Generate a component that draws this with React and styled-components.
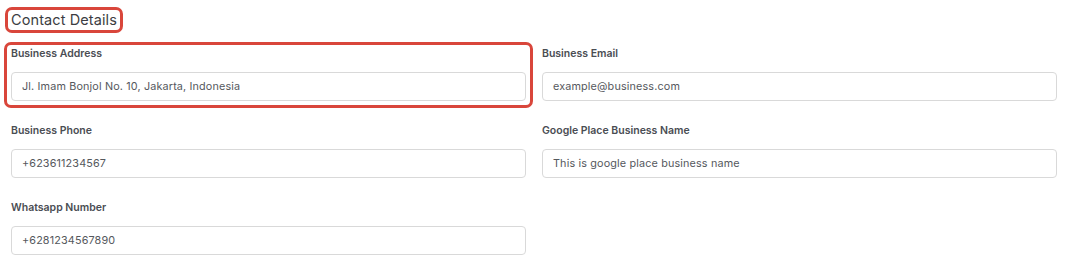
import React from "react";
import styled, { createGlobalStyle, css } from "styled-components";

const Global = createGlobalStyle`
  html, body { margin: 0; padding: 0; background: #ffffff; }
  body { font-family: "Inter", "Open Sans", sans-serif; }
`;

const Page = styled.div`
  padding: 9px 15px 0 11px;
  width: 1046px;
`;

const highlight = css`
  position: relative;
  &::after {
    content: "";
    position: absolute;
    pointer-events: none;
    border: 3px solid #d9463b;
    border-radius: 7px;
  }
`;

const Title = styled.h2`
  ${highlight}
  display: inline-block;
  margin: 0;
  font-size: 14.5px;
  line-height: 20px;
  font-weight: 400;
  color: #3b3d42;
  letter-spacing: 0.1px;
  &::after {
    inset: -3px -6px -3px -6px;
  }
`;

const Grid = styled.div`
  display: grid;
  grid-template-columns: 515px 515px;
  column-gap: 16px;
  row-gap: 22px;
  margin-top: 16px;
`;

const Field = styled.div`
  display: flex;
  flex-direction: column;
  gap: 10px;
  ${({ $highlighted }) =>
    $highlighted &&
    css`
      ${highlight}
      &::after {
        inset: -4px -7px -7px -7px;
      }
    `}
`;

const Label = styled.label`
  font-size: 10.5px;
  line-height: 16px;
  font-weight: 600;
  color: #4a4d53;
`;

const Input = styled.input`
  box-sizing: border-box;
  width: 100%;
  height: 29px;
  padding: 0 10px;
  border: 1px solid #d9d9d9;
  border-radius: 4px;
  font-family: inherit;
  font-size: 10.8px;
  letter-spacing: 0.15px;
  color: #55585d;
  background: #fff;
  outline: none;
`;

const fields = [
  { label: "Business Address", value: "Jl. Imam Bonjol No. 10, Jakarta, Indonesia", highlighted: true },
  { label: "Business Email", value: "example@business.com" },
  { label: "Business Phone", value: "+623611234567" },
  { label: "Google Place Business Name", value: "This is google place business name" },
  { label: "Whatsapp Number", value: "+6281234567890" },
];

export default function App() {
  return (
    <Page>
      <Global />
      <Title>Contact Details</Title>
      <Grid>
        {fields.map((f) => (
          <Field key={f.label} $highlighted={f.highlighted}>
            <Label>{f.label}</Label>
            <Input defaultValue={f.value} readOnly />
          </Field>
        ))}
      </Grid>
    </Page>
  );
}
